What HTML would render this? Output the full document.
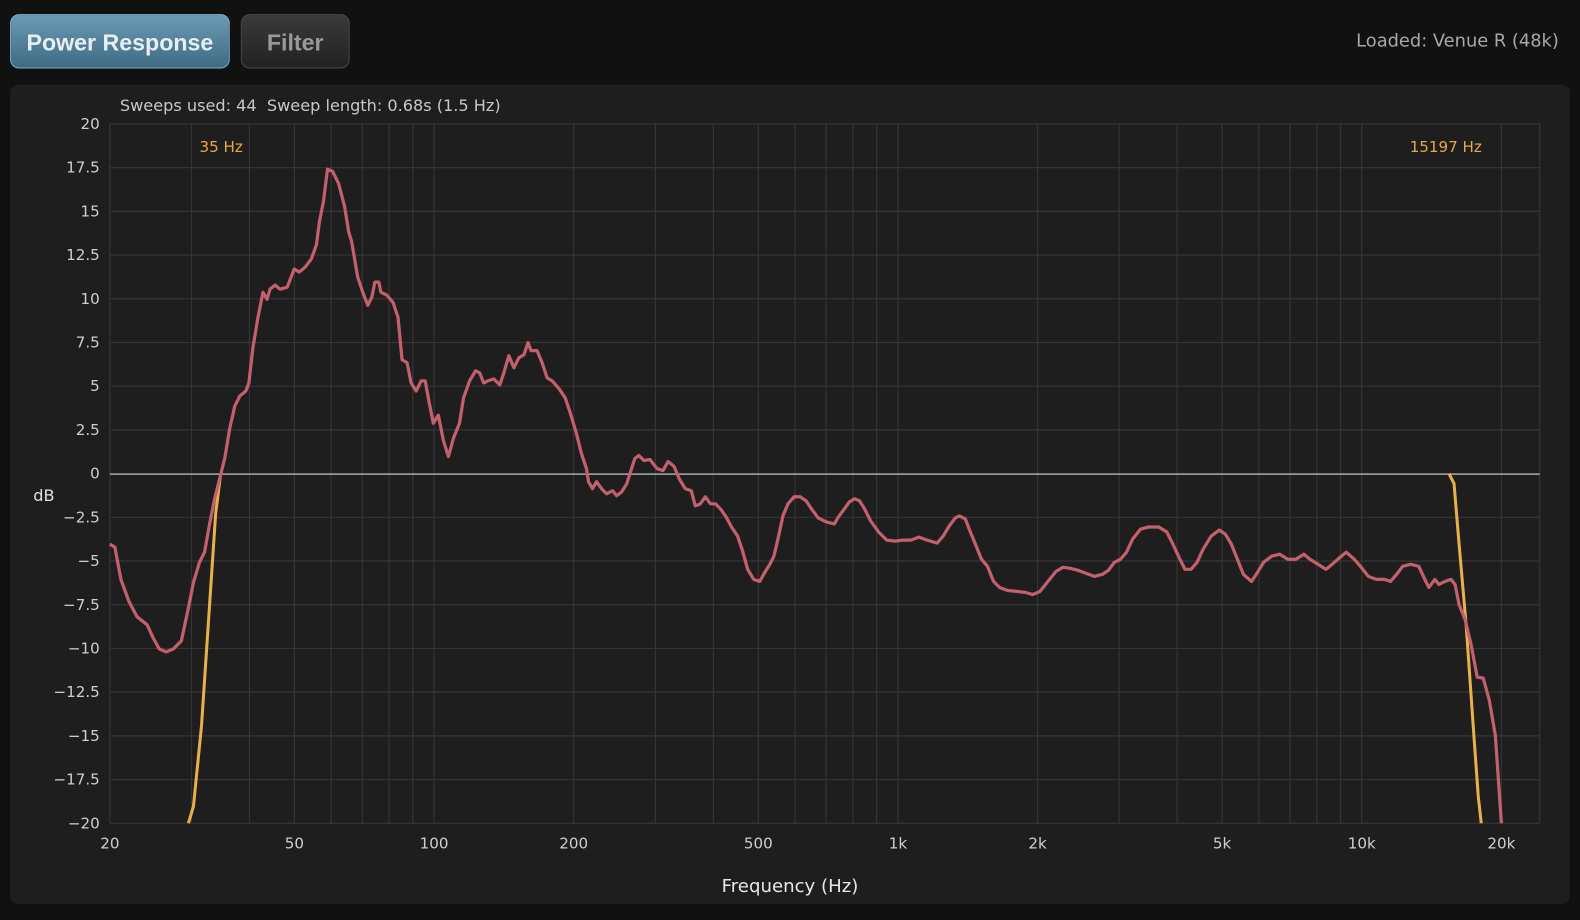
<!DOCTYPE html>
<html><head><meta charset="utf-8"><style>
body{margin:0;background:#111;width:1580px;height:920px;overflow:hidden;font-family:"Liberation Sans",sans-serif}
#w{position:absolute;left:0;top:0;width:1568px;height:913px;transform:scale(1.00765);transform-origin:0 0}
.btn{position:absolute;top:14px;height:54px;border-radius:9px;font-weight:bold;font-size:23px;line-height:54px;text-align:center;box-sizing:border-box}
#b1{left:10px;width:218px;background:linear-gradient(#6b9bb3,#3f6a83);border:1.5px solid #7fb0c8;color:#e8eef2}
#b2{left:239px;width:108px;background:linear-gradient(#3a3a3a,#222);border:1.5px solid #4a4a4a;color:#9a9a9a}
#ld{position:absolute;right:21px;top:31px;color:#a8a8a8;font-size:17.7px;font-family:"DejaVu Sans",sans-serif}
#panel{position:absolute;left:10px;top:84px;width:1548px;height:813px;background:#1e1e1e;border-radius:8px}
svg{position:absolute;left:0;top:0}
</style></head><body><div id="w">
<div class="btn" id="b1">Power Response</div>
<div class="btn" id="b2">Filter</div>
<div id="ld">Loaded: Venue R (48k)</div>
<div id="panel"></div>
<svg width="1568" height="913" font-family="DejaVu Sans, sans-serif">
<g stroke="#353535" stroke-width="1.2" id="g"></g>
<text x="119" y="110" fill="#c8c8c8" font-size="16">Sweeps used: 44&#160; Sweep length: 0.68s (1.5 Hz)</text>
<text x="198" y="151" fill="#e8a84a" font-size="15">35 Hz</text>
<text x="1399" y="151" fill="#e8a84a" font-size="15">15197 Hz</text>
<text x="33" y="497" fill="#e0e0e0" font-size="16">dB</text>
<text x="784" y="885" fill="#e8e8e8" font-size="18" text-anchor="middle">Frequency (Hz)</text>
<g id="lab" fill="#cfcfcf" font-size="15"></g>
<line x1="109" y1="470.5" x2="1528" y2="470.5" stroke="#bdbdbd" stroke-width="1.2"/>
<polyline fill="none" stroke="#e8b04a" stroke-width="3" points="187,817 192,800 200,720 208,600 214,510 219,470"/>
<polyline fill="none" stroke="#e8b04a" stroke-width="3" points="1438,470 1443,480 1448,540 1455,620 1462,720 1467,790 1470,817"/>
<polyline fill="none" stroke="#c4606e" stroke-width="3.2" stroke-linejoin="round" points="109,540 114,543 120,575 128,597 136,612 146,620 152,633 158,644 165,647 172,644 180,636 186,608 192,578 198,558 203,548 208,520 213,495 218,475 223,455 228,425 233,403 238,393 244,388 247,380 251,345 256,315 261,290 265,297 268,287 273,283 278,287 285,285 292,267 297,270 303,265 309,257 314,243 317,220 321,200 325,168 330,170 336,182 342,205 346,230 349,240 355,275 360,290 365,303 369,295 372,280 376,280 378,290 384,293 390,300 395,315 399,357 404,360 408,380 413,388 418,378 422,378 426,400 430,420 435,412 440,437 445,453 450,435 456,420 460,395 466,378 472,368 476,370 480,380 484,378 490,376 496,382 500,370 505,353 510,365 515,355 520,352 524,340 527,348 533,348 538,360 543,375 548,378 555,386 561,395 566,410 572,430 577,450 582,465 584,478 588,485 592,478 597,485 602,490 608,487 612,492 617,488 622,480 630,455 634,452 639,457 645,456 652,465 658,467 663,458 669,463 674,475 680,485 686,487 690,502 695,500 700,493 705,500 710,500 715,505 720,512 726,523 732,532 737,547 742,565 748,575 754,577 759,568 764,560 768,552 772,535 777,512 782,500 788,493 794,493 800,497 806,506 812,514 820,518 828,520 832,513 838,505 843,498 848,495 853,497 858,505 864,517 872,528 880,536 888,537 896,536 904,536 912,533 920,536 930,539 936,532 942,522 948,514 952,512 958,515 963,528 968,540 974,555 980,562 986,577 992,583 1000,586 1010,587 1018,588 1025,590 1032,587 1040,577 1048,567 1055,563 1062,564 1070,566 1078,569 1086,572 1094,570 1100,566 1106,558 1112,555 1118,548 1124,535 1132,525 1140,523 1150,523 1158,528 1164,540 1170,553 1176,565 1182,565 1188,558 1194,545 1202,532 1210,526 1216,530 1222,540 1228,555 1234,570 1242,577 1248,568 1254,558 1262,552 1270,550 1278,555 1286,555 1294,550 1300,555 1308,560 1316,565 1322,560 1330,553 1336,548 1344,555 1350,562 1358,572 1366,575 1374,575 1380,577 1386,570 1392,562 1400,560 1408,562 1414,575 1418,583 1424,575 1428,580 1434,577 1440,575 1444,580 1448,600 1454,615 1460,640 1466,672 1472,673 1478,695 1484,730 1490,817"/>
</svg>
</div>
<script>
var g=document.getElementById('g'),lab=document.getElementById('lab'),ns='http://www.w3.org/2000/svg';
function el(p,t,a,txt){var e=document.createElementNS(ns,t);for(var k in a)e.setAttribute(k,a[k]);if(txt)e.textContent=txt;p.appendChild(e);}
var fs=[20,30,40,50,60,70,80,90,100,200,300,400,500,600,700,800,900,1000,2000,3000,4000,5000,6000,7000,8000,9000,10000,20000];
fs.forEach(function(f){var x=109+460.33*Math.log10(f/20);el(g,'line',{x1:x,x2:x,y1:123,y2:817});});
el(g,'line',{x1:1528,x2:1528,y1:123,y2:817});
var fl={20:'20',50:'50',100:'100',200:'200',500:'500',1000:'1k',2000:'2k',5000:'5k',10000:'10k',20000:'20k'};
for(var f in fl){var x=109+460.33*Math.log10(f/20);el(lab,'text',{x:x,y:842,'text-anchor':'middle'},fl[f]);}
for(var i=0;i<=16;i++){var y=123+43.375*i;el(g,'line',{x1:109,x2:1528,y1:y,y2:y});var v=20-2.5*i;el(lab,'text',{x:99,y:y+5,'text-anchor':'end'},(v<0?'\u2212'+(-v):''+v));}
</script>
</body></html>
